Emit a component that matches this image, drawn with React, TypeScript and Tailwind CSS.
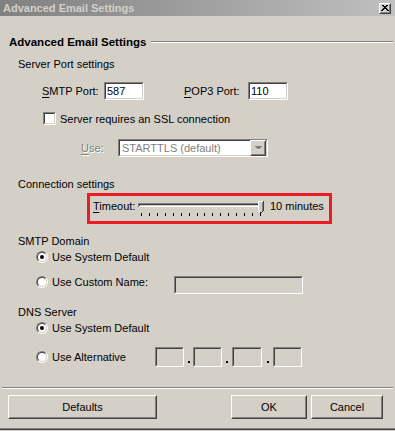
import React from "react";

function Sunken({ className = "", inner = "", children }: { className?: string; inner?: string; children?: React.ReactNode }) {
  return (
    <div className={`border border-t-[#808080] border-l-[#808080] border-b-white border-r-white ${className}`}>
      <div className={`w-full h-full border border-t-[#404040] border-l-[#404040] border-b-[#d4d0c8] border-r-[#d4d0c8] ${inner}`}>
        {children}
      </div>
    </div>
  );
}

function Raised({ className = "", children }: { className?: string; children?: React.ReactNode }) {
  return (
    <div className={`border border-t-white border-l-white border-b-[#404040] border-r-[#404040] bg-[#d4d0c8] ${className}`}>
      <div className="w-full h-full border border-t-[#d4d0c8] border-l-[#d4d0c8] border-b-[#808080] border-r-[#808080] flex items-center justify-center">
        {children}
      </div>
    </div>
  );
}

function Radio({ checked }: { checked?: boolean }) {
  return (
    <div className="w-[12px] h-[12px] rounded-full border border-t-[#808080] border-l-[#808080] border-b-white border-r-white shrink-0">
      <div className="w-full h-full rounded-full border border-t-[#404040] border-l-[#404040] border-b-[#d4d0c8] border-r-[#d4d0c8] bg-white flex items-center justify-center">
        {checked && <div className="w-[4px] h-[4px] rounded-full bg-black" />}
      </div>
    </div>
  );
}

function U({ children }: { children: React.ReactNode }) {
  return <span className="underline underline-offset-[2px]">{children}</span>;
}

function Slider() {
  const ticks = Array.from({ length: 16 }, (_, i) => Math.round(5 + i * 7.93));
  return (
    <svg width="130" height="25" viewBox="0 0 130 25" className="shrink-0" shapeRendering="crispEdges">
      <rect x="2" y="7" width="124" height="1" fill="#808080" />
      <rect x="2" y="7" width="1" height="4" fill="#808080" />
      <rect x="3" y="8" width="122" height="1" fill="#404040" />
      <rect x="3" y="8" width="1" height="2" fill="#404040" />
      <rect x="3" y="10" width="123" height="1" fill="#ffffff" />
      <rect x="125" y="7" width="1" height="4" fill="#ffffff" />
      {ticks.map((x) => (
        <rect key={x} x={x} y="17" width="1" height="3" fill="#000000" />
      ))}
      <polygon points="122,5 127,5 127,14 125,16 124,16 122,14" fill="#d4d0c8" />
      <rect x="122" y="5" width="5" height="1" fill="#ffffff" />
      <rect x="122" y="5" width="1" height="10" fill="#ffffff" />
      <rect x="127" y="5" width="1" height="10" fill="#404040" />
      <rect x="126" y="6" width="1" height="9" fill="#808080" />
      <rect x="123" y="15" width="1" height="1" fill="#ffffff" />
      <rect x="126" y="15" width="1" height="1" fill="#404040" />
      <rect x="124" y="16" width="2" height="1" fill="#404040" />
    </svg>
  );
}

export default function App() {
  const disabled = "text-[#808080] [text-shadow:1px_1px_0_#ffffff]";
  return (
    <div className="w-[395px] h-[431px] bg-[#d4d0c8] font-['Liberation_Sans',Arial,sans-serif] text-[11px] leading-[14px] text-black flex flex-col overflow-hidden select-none">
      {/* Title bar */}
      <div className="h-[16px] shrink-0 bg-linear-to-r from-[#808080] to-[#c0c0c0] flex items-center justify-between pl-[3px] pr-[4px]">
        <span className="font-bold text-[#d4d0c8] text-[11px] leading-[16px]">Advanced Email Settings</span>
        <Raised className="w-[12px] h-[11px]">
          <svg width="8" height="7" viewBox="0 0 8 7" shapeRendering="crispEdges">
            <path d="M1 0h2v1H1zM5 0h2v1H5zM2 1h2v1H2zM4 1h2v1H4zM3 2h2v1H3zM2 3h4v1H2zM1 4h2v1H1zM5 4h2v1H5zM0 5h2v1H0zM6 5h2v1H6z" fill="#000" />
          </svg>
        </Raised>
      </div>

      {/* Header */}
      <div className="mt-[18px] h-[16px] flex items-center shrink-0">
        <span className="ml-[9px] font-bold text-[11.5px] leading-[16px]">Advanced Email Settings</span>
        <div className="flex-1 ml-[5px] mr-[2px] h-0 border-t border-t-[#808080] border-b border-b-white" />
      </div>

      {/* Server Port settings */}
      <div className="mt-[7px] ml-[18px] h-[14px] shrink-0">Server Port settings</div>

      <div className="mt-[11px] h-[18px] flex items-center shrink-0">
        <span className="ml-[42px] w-[62px]"><U>S</U>MTP Port:</span>
        <Sunken className="w-[40px] h-[18px] bg-white" inner="bg-white pl-[1px] flex items-center">587</Sunken>
        <span className="ml-[40px] w-[64px]"><U>P</U>OP3 Port:</span>
        <Sunken className="w-[40px] h-[18px] bg-white" inner="bg-white pl-[1px] flex items-center">110</Sunken>
      </div>

      <div className="mt-[12px] h-[13px] flex items-center shrink-0">
        <Sunken className="ml-[43px] w-[13px] h-[13px]" inner="bg-white" />
        <span className="ml-[4px]">Server requires an SSL connection</span>
      </div>

      <div className="mt-[14px] h-[18px] flex items-center shrink-0">
        <span className={`ml-[81px] w-[37px] ${disabled}`}><U>U</U>se:</span>
        <Sunken className="w-[150px] h-[18px]" inner="bg-white flex items-center justify-between">
          <span className="pl-[2px] text-[#808080]">STARTTLS (default)</span>
          <Raised className="w-[16px] h-[16px]">
            <svg width="7" height="5" viewBox="0 0 7 5" shapeRendering="crispEdges">
              <path d="M1 1h5v1H1zM2 2h3v1H2zM3 3h1v1H3z" fill="#ffffff" />
              <path d="M0 0h7v1H0zM1 1h5v1H1zM2 2h3v1H2z" fill="#808080" />
            </svg>
          </Raised>
        </Sunken>
      </div>

      {/* Connection settings */}
      <div className="mt-[20px] ml-[18px] h-[14px] shrink-0">Connection settings</div>

      <div className="mt-[2px] ml-[87px] w-[245px] h-[31px] border-[3px] border-[#ed1c24] flex items-center shrink-0">
        <span className="ml-[3px] w-[43px] mb-[5px]"><U>T</U>imeout:</span>
        <Slider />
        <span className="ml-[4px] mb-[5px]">10 minutes</span>
      </div>

      {/* SMTP Domain */}
      <div className="mt-[10px] ml-[18px] h-[14px] shrink-0">SMTP Domain</div>

      <div className="mt-[2px] h-[14px] flex items-center shrink-0">
        <div className="ml-[36px]"><Radio checked /></div>
        <span className="ml-[4px]">Use System Default</span>
      </div>

      <div className="mt-[11px] h-[19px] flex items-start shrink-0">
        <div className="h-[14px] flex items-center">
          <div className="ml-[36px]"><Radio /></div>
          <span className="ml-[4px] w-[122px]">Use Custom Name:</span>
        </div>
        <Sunken className="mt-[1px] w-[129px] h-[18px]" inner="bg-[#d4d0c8]" />
      </div>

      {/* DNS Server */}
      <div className="mt-[11px] ml-[18px] h-[14px] shrink-0">DNS Server</div>

      <div className="mt-[2px] h-[14px] flex items-center shrink-0">
        <div className="ml-[36px]"><Radio checked /></div>
        <span className="ml-[4px]">Use System Default</span>
      </div>

      <div className="mt-[12px] h-[20px] flex items-center shrink-0">
        <div className="ml-[36px]"><Radio /></div>
        <span className="ml-[4px] w-[103px]">Use Alternative</span>
        <Sunken className="w-[29px] h-[20px]" inner="bg-[#d4d0c8]" />
        <div className="w-[9px] h-[20px] flex items-end justify-center"><div className="w-[2px] h-[2px] bg-black mb-[4px]" /></div>
        <Sunken className="w-[29px] h-[20px]" inner="bg-[#d4d0c8]" />
        <div className="w-[10px] h-[20px] flex items-end justify-center"><div className="w-[2px] h-[2px] bg-black mb-[4px]" /></div>
        <Sunken className="w-[30px] h-[20px]" inner="bg-[#d4d0c8]" />
        <div className="w-[11px] h-[20px] flex items-end justify-center"><div className="w-[2px] h-[2px] bg-black mb-[4px]" /></div>
        <Sunken className="w-[29px] h-[20px]" inner="bg-[#d4d0c8]" />
      </div>

      {/* Separator */}
      <div className="mt-[20px] ml-[2px] w-[391px] h-0 border-t border-t-[#808080] border-b border-b-white shrink-0" />

      {/* Buttons */}
      <div className="mt-[6px] h-[24px] flex items-center shrink-0">
        <Raised className="ml-[8px] w-[149px] h-[24px]">Defaults</Raised>
        <Raised className="ml-[74px] w-[76px] h-[24px]">OK</Raised>
        <Raised className="ml-[4px] w-[72px] h-[24px]">Cancel</Raised>
      </div>

      <div className="mt-[9px] h-[1px] bg-[#808080] shrink-0" />
      <div className="h-[1px] bg-[#404040] shrink-0" />
    </div>
  );
}
